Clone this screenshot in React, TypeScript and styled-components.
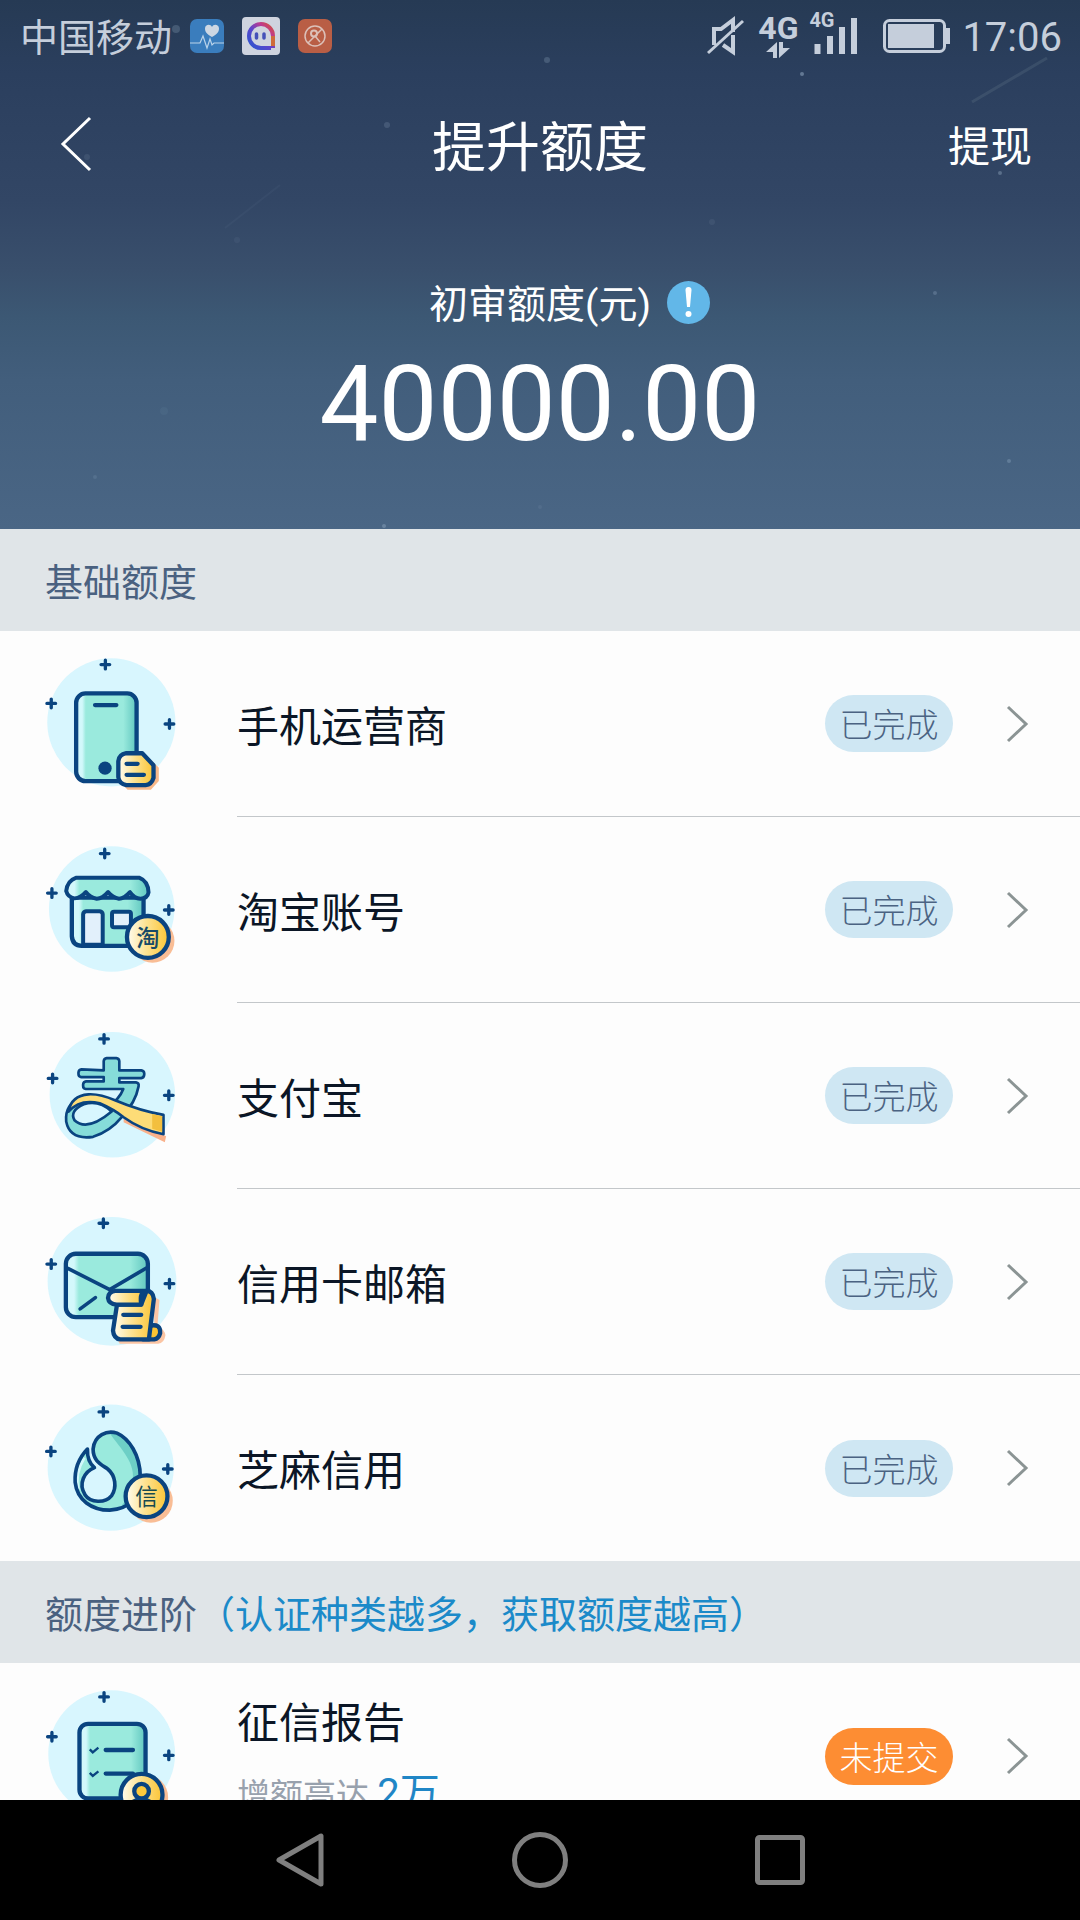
import React from "react";
import styled, { createGlobalStyle } from "styled-components";

const Global = createGlobalStyle`
  * { box-sizing: border-box; }
  body {
    margin: 0;
    background: #fdfdfd;
    font-family: Roboto, "Noto Sans CJK SC", sans-serif;
  }
  button, h1, h2, p, ul { margin: 0; padding: 0; font: inherit; }
  button { border: 0; background: none; color: inherit; cursor: pointer; }
`;

const NAVY = "#0a4480";
const MINT = "#9aeadd";

const Screen = styled.div`
  display: flex;
  flex-direction: column;
  height: 100vh;
  overflow: hidden;
`;

const Hero = styled.header`
  position: relative;
  flex: none;
  padding-bottom: 64px;
  color: #fff;
  background: linear-gradient(#263a54 0%, #2b3f5e 14%, #324665 38%, #394f6c 51%, #3c5874 60%, #425e7c 72%, #4a6685 100%);
`;

const Sky = styled.svg`
  position: absolute;
  inset: 0;
  width: 100%;
  height: 100%;
  pointer-events: none;
`;

const StatusBar = styled.div`
  display: flex;
  align-items: center;
  justify-content: space-between;
  height: 72px;
  padding: 0 18px 0 20px;
  color: #c5cedb;
`;

const StatusGroup = styled.div<{ $gap: number }>`
  display: flex;
  align-items: center;
  gap: ${(p) => p.$gap}px;
`;

const Carrier = styled.span`
  padding-top: 4px;
  font-size: 38px;
  line-height: 48px;
`;

const Clock = styled.span`
  padding-top: 4px;
  font-size: 40px;
  line-height: 48px;
`;

const Network = styled.div`
  display: flex;
  flex-direction: column;
  align-items: center;
  width: 38px;
  font-size: 32px;
  font-weight: 700;
  line-height: 28px;
`;

const Signal = styled.div`
  position: relative;
  width: 62px;
  height: 48px;
`;

const SignalTag = styled.span`
  position: absolute;
  top: 0;
  left: 0;
  font-size: 20px;
  font-weight: 700;
  line-height: 16px;
`;

const TitleBar = styled.div`
  display: grid;
  grid-template-columns: 1fr auto 1fr;
  align-items: center;
  height: 148px;
  padding: 0 48px;
`;

const BackButton = styled.button`
  justify-self: start;
  display: flex;
  padding: 8px 12px 12px;
`;

const Title = styled.h1`
  padding-top: 6px;
  font-size: 54px;
  font-weight: 400;
  line-height: 64px;
`;

const Withdraw = styled.button`
  justify-self: end;
  padding-top: 4px;
  font-size: 42px;
  line-height: 64px;
`;

const AmountHead = styled.div`
  display: grid;
  grid-template-columns: 1fr auto 1fr;
  align-items: center;
  column-gap: 16px;
  padding-top: 49px;
  font-size: 39px;
  line-height: 60px;
`;

const AmountLabel = styled.span`
  grid-column: 2;
  padding-top: 6px;
`;

const InfoButton = styled.button`
  display: flex;
  justify-self: start;
`;

const Amount = styled.p`
  margin-top: 10px;
  font-size: 105px;
  line-height: 120px;
  text-align: center;
`;

const Content = styled.main`
  flex: 1;
  min-height: 0;
  overflow: hidden;
`;

const SectionTitle = styled.h2`
  height: 102px;
  padding-left: 45px;
  background: #e0e5e8;
  color: #4a6180;
  font-size: 38px;
  font-weight: 400;
  line-height: 108px;
`;

const SectionNote = styled.span`
  color: #1b8ac9;
`;

const List = styled.ul`
  list-style: none;
`;

const Row = styled.button`
  display: flex;
  align-items: center;
  gap: 37px;
  width: 100%;
  height: 186px;
  padding-left: 30px;
  text-align: left;
`;

const RowIcon = styled.svg`
  flex: none;
  width: 170px;
  height: 170px;
`;

const RowBody = styled.span<{ $divided: boolean }>`
  display: flex;
  flex: 1;
  align-items: center;
  height: 100%;
  padding-right: 50px;
  border-bottom: ${(p) => (p.$divided ? "1px solid #c3c7ca" : "0")};
`;

const RowText = styled.span`
  display: flex;
  flex: 1;
  flex-direction: column;
  gap: 6px;
  padding-top: 8px;
`;

const RowTitle = styled.span`
  color: #0b1626;
  font-size: 42px;
  line-height: 64px;
`;

const RowHint = styled.span`
  color: #98a1ad;
  font-size: 33px;
  line-height: 64px;
`;

const Raise = styled.span`
  color: #1f86c6;
  font-size: 40px;
`;

const Badge = styled.span<{ $pending: boolean }>`
  width: 128px;
  height: 57px;
  margin-right: 53px;
  border-radius: 29px;
  background: ${(p) => (p.$pending ? "#fd8d33" : "#cfe7f3")};
  color: ${(p) => (p.$pending ? "#fff" : "#4b6382")};
  font-size: 33px;
  font-weight: 300;
  line-height: 62px;
  text-align: center;
`;

const SystemNav = styled.nav`
  display: flex;
  flex: none;
  justify-content: center;
  height: 120px;
  background: #000;
`;

const NavButton = styled.button`
  display: flex;
  align-items: center;
  justify-content: center;
  width: 240px;
`;

const stars = [
  [176, 29, 4, 0.2], [387, 125, 3, 0.16], [87, 157, 3, 0.1], [547, 60, 3, 0.2],
  [802, 74, 2, 0.4], [1000, 173, 2, 0.3], [935, 293, 2, 0.22], [712, 222, 3, 0.08],
  [1009, 461, 2, 0.24], [384, 526, 2, 0.28], [95, 477, 2, 0.12], [164, 411, 4, 0.05],
  [540, 507, 2, 0.08], [237, 240, 3, 0.06],
];

function HeartApp() {
  return (
    <svg width="34" height="34" viewBox="0 0 34 34">
      <rect width="34" height="34" rx="7" fill="#3a7dbd" />
      <path d="M22 18c-5-3-7-5-7-8.500 0-4 5.500-5 7-1.500 1.500-3.500 7-2.500 7 1.500 0 3.500-2 5.500-7 8.500z" fill="#cdd7e3" />
      <path d="M0 24h10l3-7 4 12 3-9 2 6 2-2h10" fill="none" stroke="#b9d3ea" strokeWidth="1.200" />
    </svg>
  );
}

function ChatApp() {
  return (
    <svg width="38" height="38" viewBox="0 0 38 38">
      <defs>
        <linearGradient id="chat" x1="0" y1="1" x2="1" y2="0">
          <stop offset="0" stopColor="#2b56cf" />
          <stop offset="0.450" stopColor="#5a45cc" />
          <stop offset="0.750" stopColor="#c03a8d" />
          <stop offset="1" stopColor="#d4562e" />
        </linearGradient>
      </defs>
      <rect width="38" height="38" rx="4" fill="#cfd4df" />
      <path d="M31 31V19A12 12 0 1 0 19 31h10" fill="none" stroke="url(#chat)" strokeWidth="4" />
      <path d="M31 19v10" stroke="#cf6b3a" strokeWidth="4" />
      <path d="M14.500 17v4M22 17v4" stroke="#4551b8" strokeWidth="3.500" strokeLinecap="round" />
    </svg>
  );
}

function SearchApp() {
  return (
    <svg width="34" height="34" viewBox="0 0 34 34">
      <rect width="34" height="34" rx="7" fill="#b95e45" />
      <g fill="none" stroke="#dcc0b8">
        <circle cx="17" cy="17" r="10" strokeWidth="1.500" />
        <circle cx="16" cy="14.500" r="3" strokeWidth="2" />
        <path d="M24 10L10 24M17 17l5 6" strokeWidth="1.500" />
      </g>
    </svg>
  );
}

function Sparkles({ points }: { points: number[][] }) {
  return (
    <>
      {points.map(([x, y]) => (
        <path key={x} d={`M${x - 13} ${y}h26M${x} ${y - 13}v26`} stroke={NAVY} strokeWidth="10" strokeLinecap="round" />
      ))}
    </>
  );
}

const line = { stroke: NAVY, strokeWidth: 13, strokeLinejoin: "round", strokeLinecap: "round" } as const;

function Gradients() {
  return (
    <svg width="0" height="0" style={{ display: "block" }} aria-hidden="true">
      <defs>
        <linearGradient id="gold">
          <stop offset="0" stopColor="#fffdf2" />
          <stop offset="0.450" stopColor="#fde394" />
          <stop offset="1" stopColor="#fbc434" />
        </linearGradient>
        <linearGradient id="mint">
          <stop offset="0" stopColor="#d3f8fb" />
          <stop offset="0.100" stopColor="#d3f8fb" />
          <stop offset="0.160" stopColor={MINT} />
          <stop offset="0.780" stopColor={MINT} />
          <stop offset="0.950" stopColor="#6dcfc6" />
        </linearGradient>
      </defs>
    </svg>
  );
}

function PhoneIcon() {
  return (
    <RowIcon viewBox="0 -4 512 512">
      <circle cx="245" cy="247" r="193" fill="#d8f6fe" />
      <Sparkles points={[[227, 73], [64, 190], [420, 252]]} />
      <rect x="139" y="160" width="182" height="264" rx="28" fill="url(#mint)" {...line} />
      <path d="M196 195h64" {...line} />
      <circle cx="226" cy="385" r="20" fill={NAVY} />
      <path d="M300 356h60l28 28v40l-24 26h-70l-20-20z" fill="#f8b98a" />
      <path d="M290 340h48l34 36v38q-6 20-24 22h-58q-22-4-24-24v-48q2-20 24-24z" fill="url(#gold)" {...line} />
      <path d="M291 372h33M291 405h52" {...line} />
    </RowIcon>
  );
}

function ShopIcon() {
  return (
    <RowIcon viewBox="0 -15 512 512">
      <circle cx="246" cy="238" r="189" fill="#d8f6fe" />
      <Sparkles points={[[225, 71], [66, 190], [418, 241]]} />
      <path d="M126 204v116q2 28 30 29h160q24-2 26-26V204z" fill="url(#mint)" {...line} />
      <path d="M160 346v-92q1-8 9-9h41q8 1 9 9v92z" fill="#e2f0fb" {...line} strokeWidth="12" />
      <rect x="247" y="246" width="57" height="47" rx="6" fill="#e2f0fb" {...line} strokeWidth="12" />
      <path d="M138 144h192q26 10 27 44-3 18-24 19-19-1-32-20-18 20-33 20-19-3-33-20-17 20-34 20-20-3-33-20-15 18-34 19-20-3-25-22 3-31 29-40z" fill="url(#mint)" {...line} strokeWidth="12" />
      <circle cx="369" cy="334" r="66" fill="#f9bd95" />
      <circle cx="355" cy="322" r="63" fill="url(#gold)" {...line} />
      <text x="355" y="348" textAnchor="middle" fontSize="70" fontWeight="500" fill="#174a68">淘</text>
    </RowIcon>
  );
}

function PayIcon() {
  return (
    <RowIcon viewBox="0 -13 512 512">
      <circle cx="248" cy="239" r="189" fill="#d8f6fe" />
      <Sparkles points={[[223, 71], [68, 190], [418, 241]]} />
      <path d="M282 308l128 56-4 18-124-60z" fill="#f9b18b" />
      <g {...line} strokeWidth="8">
        <path d="M222 166v-28q1-8 9-9h29q8 1 9 9v28h66q8 1 9 8v5q-1 9-9 10h-66v13h50q10 2 8 12-9 48-50 92-36 44-87 60-70 10-81-46-5-56 50-72l72 30q38-24 50-56H168q-8-1-8-9v-5q1-8 9-9h53v-13h-68q-8-1-8-9v-5q1-8 9-9z" fill="#86dcd9" />
        <path d="M246 290q-38-36-84-22-44 20-28 48 38 36 112-26z" fill="#d8f6fe" />
        <path d="M116 290q8-48 60-52 34-2 80 18 76 32 146 44v58q-66-12-120-51-30-24-72-42-60-14-94 25z" fill="#fddc77" />
      </g>
      <path d="M368 297l30 7v47l-30-9z" fill="#f3bf3e" />
    </RowIcon>
  );
}

function MailIcon() {
  return (
    <RowIcon viewBox="0 -10 512 512">
      <circle cx="247" cy="244" r="194" fill="#d8f6fe" />
      <Sparkles points={[[221, 69], [64, 192], [420, 251]]} />
      <rect x="108" y="161" width="247" height="191" rx="30" fill="url(#mint)" {...line} />
      <path d="M114 205l126 64 112-66" fill="none" {...line} strokeWidth="11" />
      <path d="M151 327l46-34" fill="none" {...line} strokeWidth="11" />
      <path d="M372 290l18 10-6 76q22 14 24 30-4 24-22 26H270l-6-12h112z" fill="#fbc5a4" />
      <path d="M360 378q34-8 32 22-4 16-18 19h-34z" fill="#fbc434" {...line} />
      <path d="M262 314l-12 78q2 24 22 27h86l15-122q-3-24-22-24l-16 41z" fill="url(#gold)" {...line} />
      <path d="M335 314h-74q-24-2-26-20 2-20 22-21h92q-20 4-14 41z" fill="url(#gold)" {...line} />
      <path d="M281 345h54M279 381h54" {...line} />
    </RowIcon>
  );
}

function SesameIcon() {
  return (
    <RowIcon viewBox="0 -21 512 512">
      <circle cx="243" cy="234" r="190" fill="#d8f6fe" />
      <Sparkles points={[[221, 66], [63, 185], [415, 238]]} />
      <path d="M173 178C146 206 134 240 136 278C142 332 186 362 240 362C300 358 332 322 332 260C332 196 298 146 262 130C232 120 194 136 190 178C190 214 214 224 234 238C258 258 262 294 246 318C226 342 182 340 166 316C144 282 164 246 194 234C180 222 172 204 173 178z" fill={MINT} />
      <path d="M240 130C272 176 322 220 308 280C302 310 290 332 276 348C318 332 332 300 332 260C332 196 298 146 262 130z" fill="#6dcfc6" />
      <path d="M164 204q-30 48-18 96" fill="none" stroke="#d3f8fb" strokeWidth="8" />
      <path d="M173 178C146 206 134 240 136 278C142 332 186 362 240 362C300 358 332 322 332 260C332 196 298 146 262 130C232 120 194 136 190 178C190 214 214 224 234 238C258 258 262 294 246 318C226 342 182 340 166 316C144 282 164 246 194 234C180 222 172 204 173 178z" fill="none" {...line} strokeWidth="11" />
      <circle cx="364" cy="334" r="66" fill="#f9bd95" />
      <circle cx="351" cy="320" r="63" fill="url(#gold)" {...line} />
      <text x="351" y="345" textAnchor="middle" fontSize="68" fill="#174a50">信</text>
    </RowIcon>
  );
}

function ReportIcon() {
  return (
    <RowIcon viewBox="0 32 512 512">
      <circle cx="246" cy="281" r="191" fill="#d8f6fe" />
      <Sparkles points={[[223, 110], [66, 230], [418, 286]]} />
      <rect x="149" y="191" width="199" height="225" rx="26" fill="url(#mint)" {...line} />
      <path d="M228 270h82M228 341h82" {...line} />
      <path d="M180 268l9 9 17-14M180 339l9 9 17-14" fill="none" stroke={NAVY} strokeWidth="7" />
      <circle cx="349" cy="412" r="67" fill="#f9bd95" />
      <circle cx="336" cy="405" r="63" fill="url(#gold)" {...line} />
      <circle cx="336" cy="394" r="22" fill="#fdc93b" {...line} />
      <path d="M296 448q8-28 40-30 32 2 40 30" fill="none" {...line} />
    </RowIcon>
  );
}

function ItemRow(props: { icon: React.ReactNode; title: string; hint?: React.ReactNode; pending?: boolean; divided: boolean }) {
  return (
    <li>
      <Row type="button">
        {props.icon}
        <RowBody $divided={props.divided}>
          <RowText>
            <RowTitle>{props.title}</RowTitle>
            {props.hint && <RowHint>{props.hint}</RowHint>}
          </RowText>
          <Badge $pending={!!props.pending}>{props.pending ? "未提交" : "已完成"}</Badge>
          <svg width="24" height="38" viewBox="0 0 24 38">
            <path d="M2 2l18 17L2 36" fill="none" stroke="#8b9494" strokeWidth="3" />
          </svg>
        </RowBody>
      </Row>
    </li>
  );
}

const basics = [
  { title: "手机运营商", icon: <PhoneIcon /> },
  { title: "淘宝账号", icon: <ShopIcon /> },
  { title: "支付宝", icon: <PayIcon /> },
  { title: "信用卡邮箱", icon: <MailIcon /> },
  { title: "芝麻信用", icon: <SesameIcon /> },
];

export default function App() {
  return (
    <Screen lang="zh-CN">
      <Global />
      <Gradients />
      <Hero>
        <Sky viewBox="0 0 1080 529" preserveAspectRatio="none" aria-hidden="true">
          {stars.map(([x, y, r, o]) => (
            <circle key={x} cx={x} cy={y} r={r} fill="#b9d0e6" opacity={o} />
          ))}
          <path d="M972 102L1047 58" stroke="#8aa0a8" strokeWidth="3" opacity="0.160" />
          <path d="M225 228L280 185" stroke="#8aa0b8" strokeWidth="2" opacity="0.060" />
        </Sky>
        <StatusBar>
          <StatusGroup $gap={18}>
            <Carrier>中国移动</Carrier>
            <HeartApp />
            <ChatApp />
            <SearchApp />
          </StatusGroup>
          <StatusGroup $gap={12}>
            <svg width="40" height="40" viewBox="0 0 40 40">
              <path d="M7 29V13h7L26 4v12M16 29l10 7V19" fill="none" stroke="#c5cedb" strokeWidth="4" />
              <path d="M1 37L36 5" stroke="#c5cedb" strokeWidth="3" />
            </svg>
            <Network>
              <span>4G</span>
              <svg width="24" height="16" viewBox="0 0 24 16">
                <path d="M11 0v16H7v-6H0zM13 16V0h4v6h7z" fill="#c5cedb" />
              </svg>
            </Network>
            <Signal>
              <SignalTag>4G</SignalTag>
              <svg width="60" height="48" viewBox="0 0 60 48">
                <path d="M8.500 32v10M21 24v18M33 15v27M45 6v36" stroke="#c5cedb" strokeWidth="6" />
              </svg>
            </Signal>
            <svg width="67" height="34" viewBox="0 0 67 34">
              <rect x="1.500" y="1.500" width="60" height="31" rx="5" fill="none" stroke="#c5cedb" strokeWidth="3" />
              <path d="M5 5h46v24H5zM63 9h4v16h-4z" fill="#c5cedb" />
            </svg>
            <Clock>17:06</Clock>
          </StatusGroup>
        </StatusBar>
        <TitleBar>
          <BackButton type="button" aria-label="返回">
            <svg width="32" height="58" viewBox="0 0 32 58">
              <path d="M30 3L3 29l27 26" fill="none" stroke="#fff" strokeWidth="3" />
            </svg>
          </BackButton>
          <Title>提升额度</Title>
          <Withdraw type="button">提现</Withdraw>
        </TitleBar>
        <AmountHead>
          <AmountLabel>初审额度(元)</AmountLabel>
          <InfoButton type="button" aria-label="额度说明">
            <svg width="43" height="43" viewBox="0 0 43 43">
              <circle cx="21.500" cy="21.500" r="21.500" fill="#62b7e8" />
              <path d="M18.500 9a3 3 0 0 1 6 0L23 26h-3z" fill="#fff" />
              <circle cx="21.500" cy="33" r="3" fill="#fff" />
            </svg>
          </InfoButton>
        </AmountHead>
        <Amount>40000.00</Amount>
      </Hero>
      <Content>
        <SectionTitle>基础额度</SectionTitle>
        <List>
          {basics.map((item, i) => (
            <ItemRow key={item.title} icon={item.icon} title={item.title} divided={i < basics.length - 1} />
          ))}
        </List>
        <SectionTitle>
          额度进阶<SectionNote>（认证种类越多，获取额度越高）</SectionNote>
        </SectionTitle>
        <List>
          <ItemRow icon={<ReportIcon />} title="征信报告" hint={<>增额高达 <Raise>2万</Raise></>} pending divided={false} />
        </List>
      </Content>
      <SystemNav>
        <NavButton type="button" aria-label="后退">
          <svg width="52" height="56" viewBox="0 0 52 56">
            <path d="M47 4v48L5 28z" fill="none" stroke="#7f7f7f" strokeWidth="5" strokeLinejoin="round" />
          </svg>
        </NavButton>
        <NavButton type="button" aria-label="主屏幕">
          <svg width="56" height="56" viewBox="0 0 56 56">
            <circle cx="28" cy="28" r="25.500" fill="none" stroke="#7f7f7f" strokeWidth="5" />
          </svg>
        </NavButton>
        <NavButton type="button" aria-label="最近任务">
          <svg width="50" height="50" viewBox="0 0 50 50">
            <rect x="2.500" y="2.500" width="45" height="45" rx="2" fill="none" stroke="#7f7f7f" strokeWidth="5" />
          </svg>
        </NavButton>
      </SystemNav>
    </Screen>
  );
}
